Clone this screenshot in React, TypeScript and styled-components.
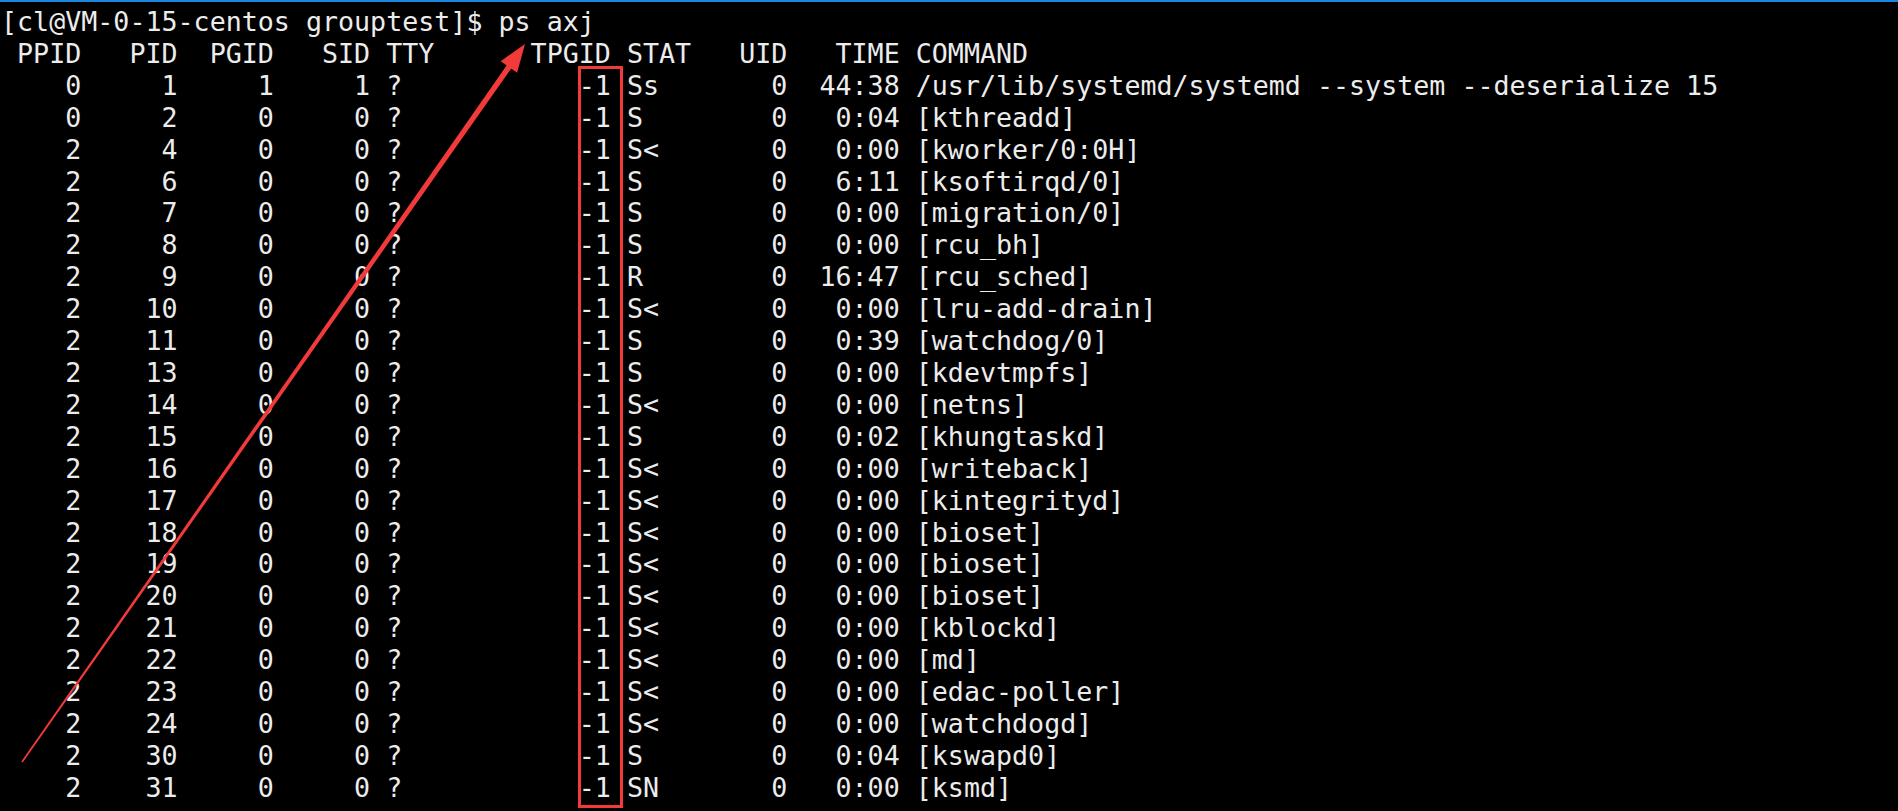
import React from "react";
import styled, { createGlobalStyle } from "styled-components";

const GlobalStyle = createGlobalStyle`
  html, body {
    margin: 0;
    padding: 0;
    background: #000;
  }
  #root {
    width: 1898px;
    height: 811px;
  }
`;

const Screen = styled.div`
  position: relative;
  width: 1898px;
  height: 811px;
  background: #000;
  overflow: hidden;
  display: flex;
  flex-direction: column;
`;

const WindowEdge = styled.div`
  height: 2px;
  flex: 0 0 2px;
  background: #1a86e0;
`;

const Terminal = styled.div`
  padding: 4px 0 0 1px;
  font-family: "DejaVu Sans Mono", "Liberation Mono", monospace;
  font-size: 26.66px;
  line-height: 31.92px;
  color: #ececec;
  white-space: pre;
`;

const Line = styled.div`
  height: 31.92px;
`;

const Highlight = styled.div<{ $left: number; $top: number; $w: number; $h: number }>`
  position: absolute;
  left: ${(p) => p.$left}px;
  top: ${(p) => p.$top}px;
  width: ${(p) => p.$w}px;
  height: ${(p) => p.$h}px;
  box-sizing: border-box;
  border: 3px solid #f23a3a;
  pointer-events: none;
`;

const Overlay = styled.svg`
  position: absolute;
  left: 0;
  top: 0;
  width: 1898px;
  height: 811px;
  pointer-events: none;
`;

type Row = [number, number, number, number, string, number, string, number, string, string];

const rows: Row[] = [
  [0, 1, 1, 1, "?", -1, "Ss", 0, "44:38", "/usr/lib/systemd/systemd --system --deserialize 15"],
  [0, 2, 0, 0, "?", -1, "S", 0, "0:04", "[kthreadd]"],
  [2, 4, 0, 0, "?", -1, "S<", 0, "0:00", "[kworker/0:0H]"],
  [2, 6, 0, 0, "?", -1, "S", 0, "6:11", "[ksoftirqd/0]"],
  [2, 7, 0, 0, "?", -1, "S", 0, "0:00", "[migration/0]"],
  [2, 8, 0, 0, "?", -1, "S", 0, "0:00", "[rcu_bh]"],
  [2, 9, 0, 0, "?", -1, "R", 0, "16:47", "[rcu_sched]"],
  [2, 10, 0, 0, "?", -1, "S<", 0, "0:00", "[lru-add-drain]"],
  [2, 11, 0, 0, "?", -1, "S", 0, "0:39", "[watchdog/0]"],
  [2, 13, 0, 0, "?", -1, "S", 0, "0:00", "[kdevtmpfs]"],
  [2, 14, 0, 0, "?", -1, "S<", 0, "0:00", "[netns]"],
  [2, 15, 0, 0, "?", -1, "S", 0, "0:02", "[khungtaskd]"],
  [2, 16, 0, 0, "?", -1, "S<", 0, "0:00", "[writeback]"],
  [2, 17, 0, 0, "?", -1, "S<", 0, "0:00", "[kintegrityd]"],
  [2, 18, 0, 0, "?", -1, "S<", 0, "0:00", "[bioset]"],
  [2, 19, 0, 0, "?", -1, "S<", 0, "0:00", "[bioset]"],
  [2, 20, 0, 0, "?", -1, "S<", 0, "0:00", "[bioset]"],
  [2, 21, 0, 0, "?", -1, "S<", 0, "0:00", "[kblockd]"],
  [2, 22, 0, 0, "?", -1, "S<", 0, "0:00", "[md]"],
  [2, 23, 0, 0, "?", -1, "S<", 0, "0:00", "[edac-poller]"],
  [2, 24, 0, 0, "?", -1, "S<", 0, "0:00", "[watchdogd]"],
  [2, 30, 0, 0, "?", -1, "S", 0, "0:04", "[kswapd0]"],
  [2, 31, 0, 0, "?", -1, "SN", 0, "0:00", "[ksmd]"],
];

const r = (v: string | number, n: number) => String(v).padStart(n, " ");
const l = (v: string | number, n: number) => String(v).padEnd(n, " ");

const fmt = (c: (string | number)[]) =>
  [r(c[0], 5), r(c[1], 5), r(c[2], 5), r(c[3], 5), l(c[4], 8), r(c[5], 5), l(c[6], 4), r(c[7], 5), r(c[8], 6), c[9]].join(" ");

const header = fmt(["PPID", "PID", "PGID", "SID", "TTY", "TPGID", "STAT", "UID", "TIME", "COMMAND"]);

// arrow geometry
const tail = { x: 22, y: 762 };
const tip = { x: 525, y: 44 };
const dx = tip.x - tail.x;
const dy = tip.y - tail.y;
const len = Math.hypot(dx, dy);
const ux = dx / len;
const uy = dy / len;
const nx = -uy;
const ny = ux;
const headLen = 28;
const headHalf = 10;
const bx = tip.x - headLen * ux;
const by = tip.y - headLen * uy;
const sx = bx + 2 * ux;
const sy = by + 2 * uy;
const pt = (x: number, y: number) => `${x.toFixed(1)},${y.toFixed(1)}`;
const shaft = [
  pt(tail.x + 0.9 * nx, tail.y + 0.9 * ny),
  pt(sx + 2.8 * nx, sy + 2.8 * ny),
  pt(sx - 2.8 * nx, sy - 2.8 * ny),
  pt(tail.x - 0.9 * nx, tail.y - 0.9 * ny),
].join(" ");
const head = [
  pt(tip.x, tip.y),
  pt(bx + headHalf * nx, by + headHalf * ny),
  pt(bx - headHalf * nx, by - headHalf * ny),
].join(" ");

export default function App() {
  return (
    <>
      <GlobalStyle />
      <Screen>
        <WindowEdge />
        <Terminal>
          <Line>[cl@VM-0-15-centos grouptest]$ ps axj</Line>
          <Line>{header}</Line>
          {rows.map((row, i) => (
            <Line key={i}>{fmt(row)}</Line>
          ))}
        </Terminal>
        <Highlight $left={578} $top={66} $w={45} $h={742} />
        <Overlay viewBox="0 0 1898 811">
          <polygon points={shaft} fill="#f23a3a" />
          <polygon points={head} fill="#f23a3a" />
        </Overlay>
      </Screen>
    </>
  );
}
